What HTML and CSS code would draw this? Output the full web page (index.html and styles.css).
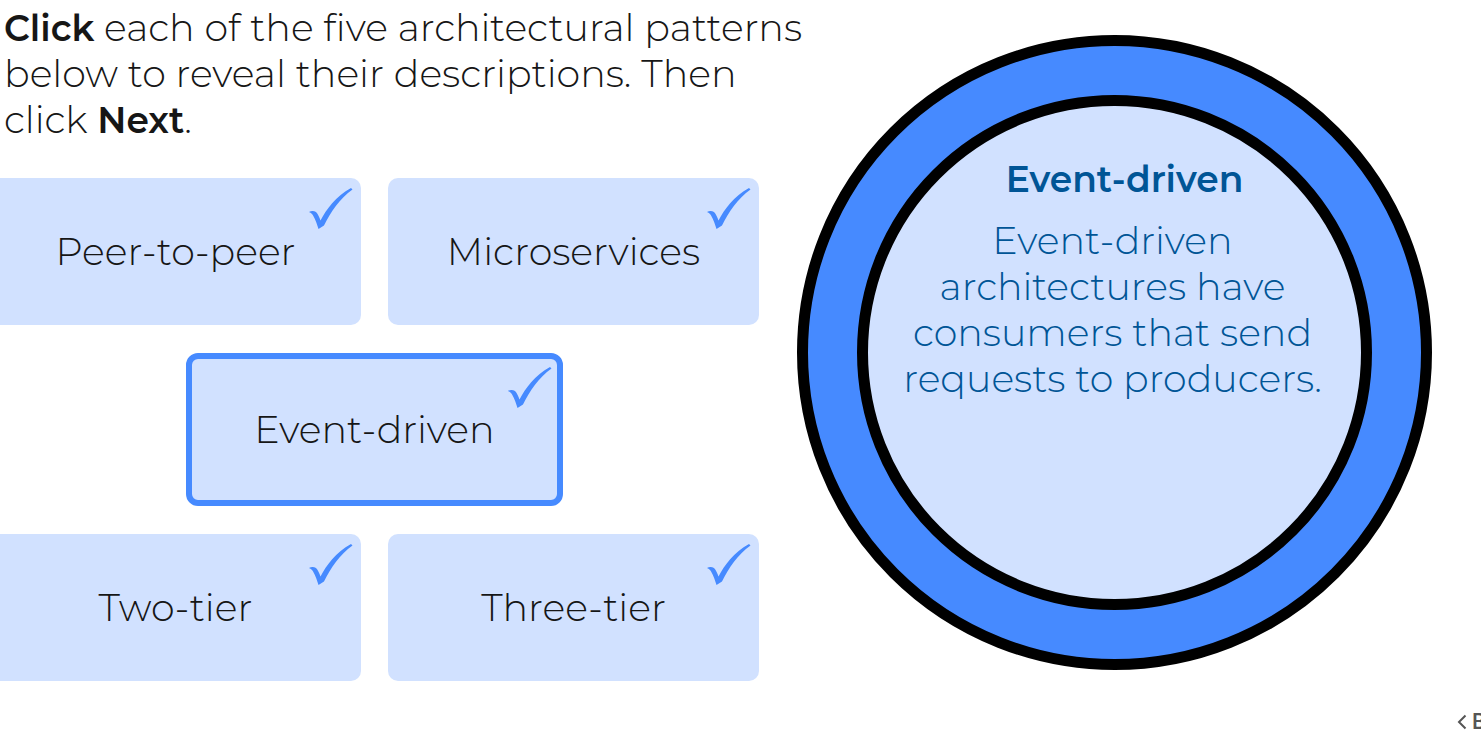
FILE: index.html
```html
<!DOCTYPE html>
<html lang="en">
<head>
<meta charset="utf-8">
<meta name="viewport" content="width=device-width, initial-scale=1">
<title>Architectural patterns</title>
<link rel="stylesheet" href="styles.css">
</head>
<body>
<svg class="symbols" aria-hidden="true">
  <symbol id="check" viewBox="0 0 44 42">
    <path d="M0 24C2 22.500 5 22.500 7 24C9 26 10.500 29.500 11.500 32.500C17 22 27 8 42 0L43.500 1.500C31 10.500 21.500 24 15 37.500L9.500 41C8 36 5.500 29 3 26C2 25 1 24.500 0 24Z"/>
  </symbol>
</svg>
<main class="activity">
  <section class="choices">
    <p class="intro"><strong>Click</strong> each of the five architectural patterns below to reveal their descriptions. Then click <strong>Next</strong>.</p>
    <div class="cards">
      <button class="card" type="button">Peer-to-peer<svg class="check" aria-hidden="true"><use href="#check"/></svg></button>
      <button class="card" type="button">Microservices<svg class="check" aria-hidden="true"><use href="#check"/></svg></button>
      <button class="card card-selected" type="button" aria-pressed="true">Event-driven<svg class="check" aria-hidden="true"><use href="#check"/></svg></button>
      <button class="card" type="button">Two-tier<svg class="check" aria-hidden="true"><use href="#check"/></svg></button>
      <button class="card" type="button">Three-tier<svg class="check" aria-hidden="true"><use href="#check"/></svg></button>
    </div>
  </section>
  <section class="ring">
    <div class="disc">
      <h2 class="disc-title">Event-driven</h2>
      <p class="disc-text">Event-driven architectures have consumers that send requests to producers.</p>
    </div>
  </section>
</main>
<nav class="pager">
  <button class="back" type="button"><svg class="chevron" viewBox="0 0 10 16" aria-hidden="true"><path d="M8.500 1.500L2 8L8.500 14.500"/></svg>B</button>
</nav>
</body>
</html>
```
FILE: styles.css
```css
* {
  box-sizing: border-box;
}

body {
  margin: 0;
  overflow: hidden;
  background: #fff;
  color: #161616;
  font-family: Montserrat, Inter, "Open Sans", sans-serif;
  font-size: 38px;
  font-weight: 300;
  line-height: 46px;
}

.symbols {
  position: absolute;
  width: 0;
  height: 0;
}

.activity {
  display: grid;
  grid-template-columns: 797fr 635fr 49fr;
  align-items: start;
}

.intro {
  margin: 0 -24px 0 0;
  padding: 5px 0 35px 4px;
}

strong {
  font-size: 36px;
  font-weight: 600;
}

.cards {
  display: grid;
  grid-template-columns: 1fr 1fr;
  gap: 28px 27px;
  margin: 0 38px 0 -10px;
}

.card {
  position: relative;
  min-height: 147px;
  padding: 0;
  border: 0;
  border-radius: 10px;
  background: #d1e1ff;
  color: inherit;
  font: inherit;
}

.card-selected {
  grid-column: 1 / -1;
  justify-self: center;
  width: 49%;
  min-height: 153px;
  border: 6px solid #468aff;
  border-radius: 12px;
}

.check {
  position: absolute;
  top: 10px;
  right: 8px;
  width: 44px;
  height: 42px;
  fill: #468aff;
}

.card-selected .check {
  top: 8px;
  right: 5px;
}

.ring {
  margin-top: 35px;
  padding: 49px;
  aspect-ratio: 1;
  border: 11px solid #000;
  border-radius: 50%;
  background: #468aff;
}

.disc {
  height: 100%;
  padding: 50px 34px 0 30px;
  border: 11px solid #000;
  border-radius: 50%;
  background: #d1e1ff;
  color: #005596;
  text-align: center;
}

.disc-title {
  margin: 0 0 16px 24px;
  font-size: 36px;
  font-weight: 600;
}

.disc-text {
  margin: 0;
}

.pager {
  display: flex;
  justify-content: flex-end;
  margin-top: 30px;
}

.back {
  display: flex;
  align-items: center;
  gap: 5px;
  width: 24px;
  padding: 0;
  border: 0;
  background: none;
  color: #555;
  font-family: Roboto, sans-serif;
  font-size: 22px;
  font-weight: 500;
  line-height: 22px;
}

.chevron {
  flex: none;
  width: 10px;
  height: 16px;
  fill: none;
  stroke: #555;
  stroke-width: 2;
}
```
